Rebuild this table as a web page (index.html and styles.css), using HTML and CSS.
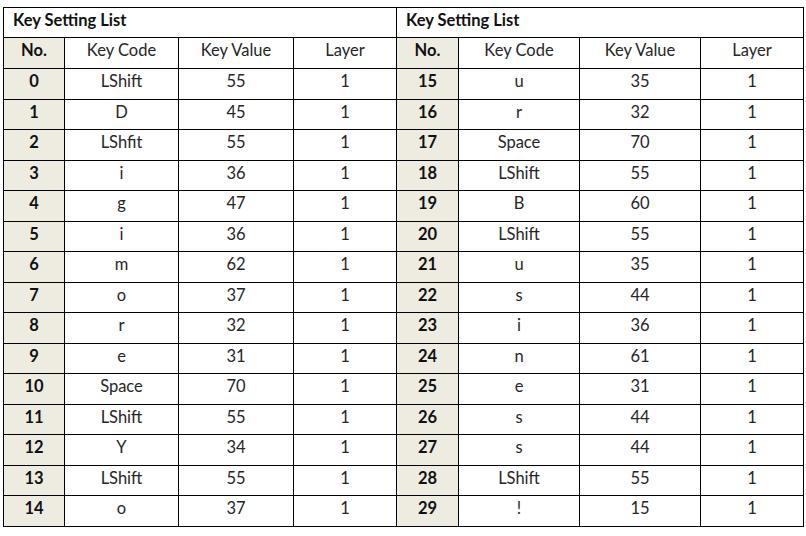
FILE: index.html
```html
<!DOCTYPE html>
<html>
<head>
<meta charset="utf-8">
<link rel="stylesheet" href="styles.css">
</head>
<body>
<table class="sheet">
<colgroup>
<col class="c-no"><col class="c-code"><col class="c-val"><col class="c-layer">
<col class="c-no2"><col class="c-code2"><col class="c-val2"><col class="c-layer2">
</colgroup>
<tr class="title-row"><td class="title" colspan="4">Key Setting List</td><td class="title" colspan="4">Key Setting List</td></tr>
<tr class="head-row"><td class="no">No.</td><td>Key Code</td><td>Key Value</td><td>Layer</td><td class="no">No.</td><td>Key Code</td><td>Key Value</td><td>Layer</td></tr>
<tr><td class="no">0</td><td>LShift</td><td>55</td><td>1</td><td class="no">15</td><td>u</td><td>35</td><td>1</td></tr>
<tr><td class="no">1</td><td>D</td><td>45</td><td>1</td><td class="no">16</td><td>r</td><td>32</td><td>1</td></tr>
<tr><td class="no">2</td><td>LShfit</td><td>55</td><td>1</td><td class="no">17</td><td>Space</td><td>70</td><td>1</td></tr>
<tr><td class="no">3</td><td>i</td><td>36</td><td>1</td><td class="no">18</td><td>LShift</td><td>55</td><td>1</td></tr>
<tr><td class="no">4</td><td>g</td><td>47</td><td>1</td><td class="no">19</td><td>B</td><td>60</td><td>1</td></tr>
<tr><td class="no">5</td><td>i</td><td>36</td><td>1</td><td class="no">20</td><td>LShift</td><td>55</td><td>1</td></tr>
<tr><td class="no">6</td><td>m</td><td>62</td><td>1</td><td class="no">21</td><td>u</td><td>35</td><td>1</td></tr>
<tr><td class="no">7</td><td>o</td><td>37</td><td>1</td><td class="no">22</td><td>s</td><td>44</td><td>1</td></tr>
<tr><td class="no">8</td><td>r</td><td>32</td><td>1</td><td class="no">23</td><td>i</td><td>36</td><td>1</td></tr>
<tr><td class="no">9</td><td>e</td><td>31</td><td>1</td><td class="no">24</td><td>n</td><td>61</td><td>1</td></tr>
<tr><td class="no">10</td><td>Space</td><td>70</td><td>1</td><td class="no">25</td><td>e</td><td>31</td><td>1</td></tr>
<tr><td class="no">11</td><td>LShift</td><td>55</td><td>1</td><td class="no">26</td><td>s</td><td>44</td><td>1</td></tr>
<tr><td class="no">12</td><td>Y</td><td>34</td><td>1</td><td class="no">27</td><td>s</td><td>44</td><td>1</td></tr>
<tr><td class="no">13</td><td>LShift</td><td>55</td><td>1</td><td class="no">28</td><td>LShift</td><td>55</td><td>1</td></tr>
<tr><td class="no">14</td><td>o</td><td>37</td><td>1</td><td class="no">29</td><td>!</td><td>15</td><td>1</td></tr>
</table>
</body>
</html>
```
FILE: styles.css
```css
html, body {
  margin: 0;
  background: #ffffff;
}
body {
  padding: 7px 0 0 3px;
  font-family: Lato, "Liberation Sans", sans-serif;
  font-size: 16.5px;
  color: #262626;
}
.sheet {
  border-collapse: collapse;
  table-layout: fixed;
  width: 800px;
}
.c-no { width: 61px; }
.c-code { width: 114px; }
.c-val { width: 115px; }
.c-layer { width: 103px; }
.c-no2 { width: 62px; }
.c-code2 { width: 121px; }
.c-val2 { width: 121px; }
.c-layer2 { width: 103px; }
.sheet td {
  border: 1.5px solid #000;
  height: 30.5px;
  padding: 0 0 5px 0;
  text-align: center;
  vertical-align: middle;
  box-sizing: border-box;
}
.sheet .title-row td {
  height: 30px;
  padding-bottom: 6px;
}
.sheet .head-row td {
  height: 31px;
  padding-bottom: 7px;
}
.sheet td.title {
  text-align: left;
  font-weight: 700;
  color: #111;
  padding-left: 9px;
}
.sheet td.no {
  background: #eeece1;
  font-weight: 700;
  color: #111;
}
```
